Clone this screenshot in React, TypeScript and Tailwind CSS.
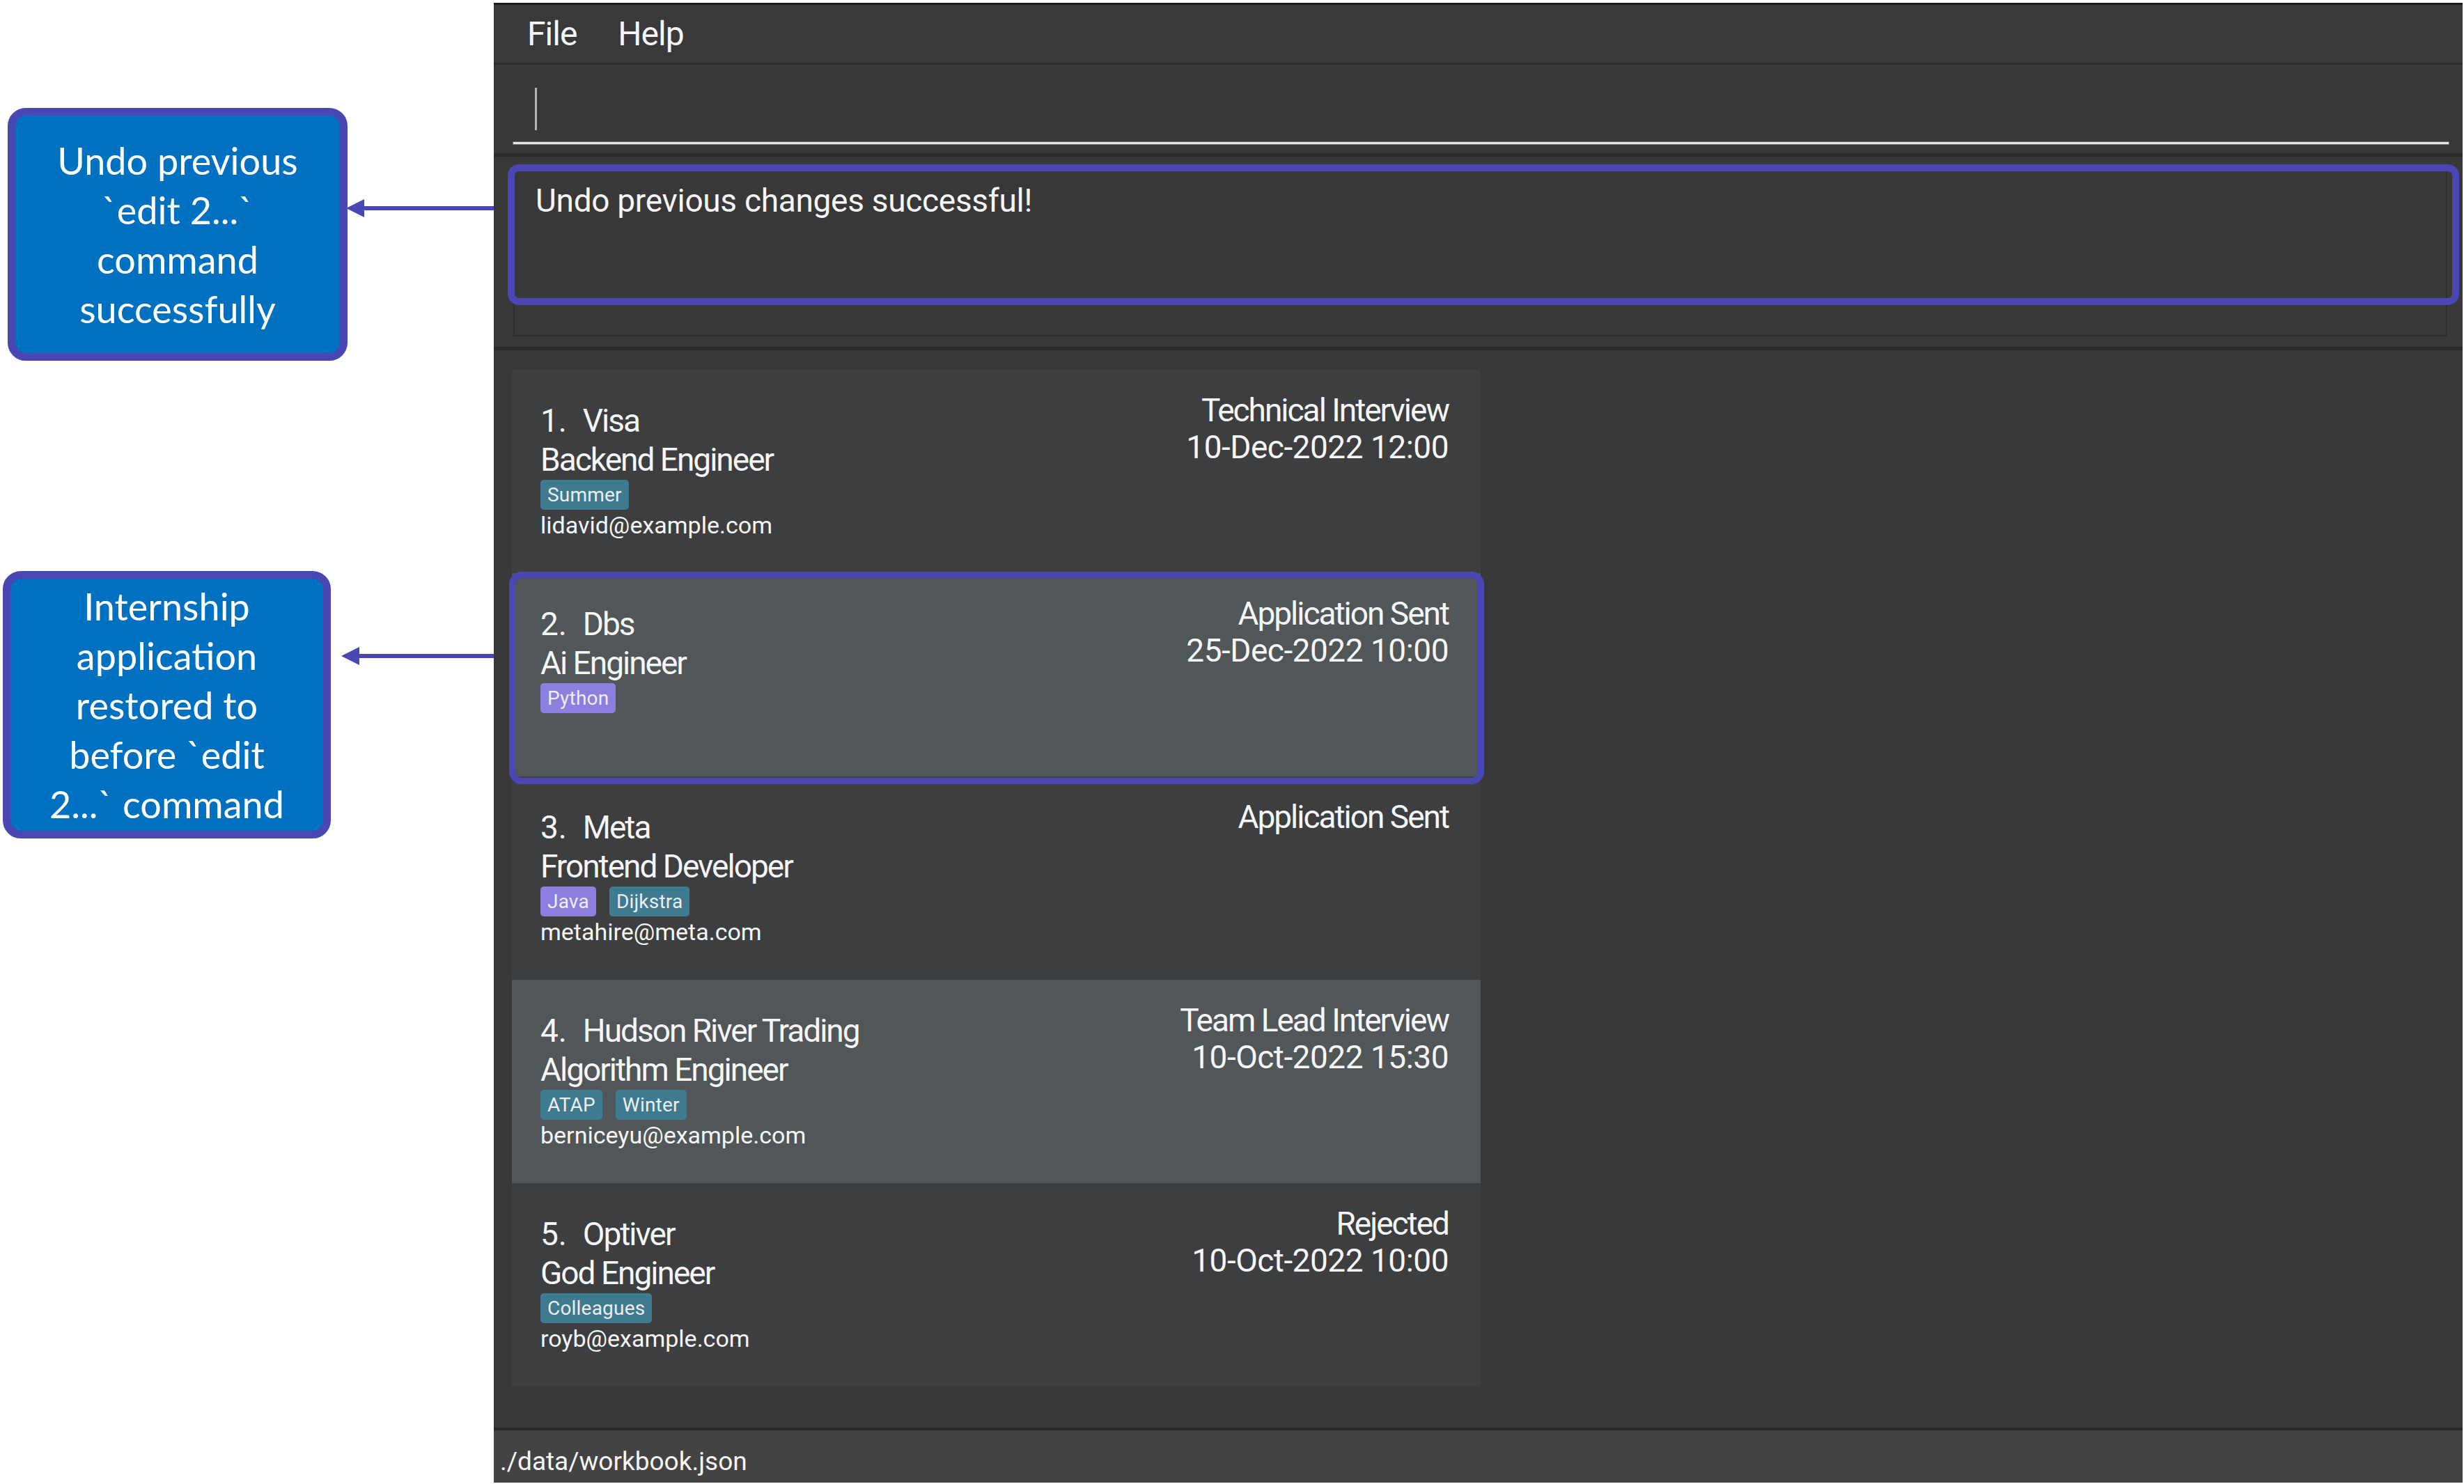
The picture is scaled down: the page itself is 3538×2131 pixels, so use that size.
import clsx from 'clsx'

type Tag = { label: string; tone: 'teal' | 'purple' }

type Application = {
  company: string
  role: string
  tags: Tag[]
  email?: string
  status: string
  date?: string
  highlight?: boolean
}

const applications: Application[] = [
  {
    company: 'Visa',
    role: 'Backend Engineer',
    tags: [{ label: 'Summer', tone: 'teal' }],
    email: 'lidavid@example.com',
    status: 'Technical Interview',
    date: '10-Dec-2022 12:00',
  },
  {
    company: 'Dbs',
    role: 'Ai Engineer',
    tags: [{ label: 'Python', tone: 'purple' }],
    status: 'Application Sent',
    date: '25-Dec-2022 10:00',
    highlight: true,
  },
  {
    company: 'Meta',
    role: 'Frontend Developer',
    tags: [
      { label: 'Java', tone: 'purple' },
      { label: 'Dijkstra', tone: 'teal' },
    ],
    email: 'metahire@meta.com',
    status: 'Application Sent',
  },
  {
    company: 'Hudson River Trading',
    role: 'Algorithm Engineer',
    tags: [
      { label: 'ATAP', tone: 'teal' },
      { label: 'Winter', tone: 'teal' },
    ],
    email: 'berniceyu@example.com',
    status: 'Team Lead Interview',
    date: '10-Oct-2022 15:30',
  },
  {
    company: 'Optiver',
    role: 'God Engineer',
    tags: [{ label: 'Colleagues', tone: 'teal' }],
    email: 'royb@example.com',
    status: 'Rejected',
    date: '10-Oct-2022 10:00',
  },
]

const Arrow = ({ width }: { width: number }) => (
  <svg width={width} height={28} viewBox={`0 0 ${width} 28`}>
    <rect x={22} y={11} width={width - 22} height={6} fill="#4a47b5" />
    <polygon points="0,14 26,1 26,27" fill="#4a47b5" />
  </svg>
)

const Note = ({ lines, className }: { lines: string[]; className: string }) => (
  <div
    className={clsx(
      'flex shrink-0 flex-col items-center justify-center rounded-[26px] border-[11px] border-[#4a47b5] bg-[#0070c0] text-center text-[54px] leading-[71px] text-white',
      className,
    )}
    style={{ fontFamily: 'Lato, "Open Sans", sans-serif' }}
  >
    {lines.map((l) => (
      <div key={l} className="whitespace-pre">
        {l}
      </div>
    ))}
  </div>
)

const TagChip = ({ tag }: { tag: Tag }) => (
  <span
    className={clsx(
      'flex h-[43px] items-center rounded-[5px] px-[10px] text-[28px] tracking-[0.2px] text-[#eeeeee]',
      tag.tone === 'purple' ? 'bg-[#8c7fdf]' : 'bg-[#3e7a90]',
    )}
  >
    {tag.label}
  </span>
)

const Card = ({ app, index }: { app: Application; index: number }) => (
  <div
    className={clsx(
      'relative flex h-[292px] justify-between',
      index % 2 === 0 ? 'bg-[#3c3e3f]' : 'bg-[#515658]',
    )}
  >
    <div className="flex flex-col pl-[41px] pt-[45px]">
      <div className="whitespace-pre text-[46px] leading-[56px] tracking-[-2px]">
        <span className="tracking-[0px]">{`${index + 1}.  `}</span>
        {app.company}
      </div>
      <div className="text-[46px] leading-[56px] tracking-[-2px]">{app.role}</div>
      <div className="mt-[1px] flex gap-[19px]">
        {app.tags.map((t) => (
          <TagChip key={t.label} tag={t} />
        ))}
      </div>
      {app.email && <div className="mt-[2px] text-[34px] leading-[40px] tracking-[0px]">{app.email}</div>}
    </div>
    <div className="flex flex-col items-end pr-[46px] pt-[32px] text-[46px] leading-[53px]">
      <div className="tracking-[-2px]">{app.status}</div>
      {app.date && <div className="tracking-[-0.5px]">{app.date}</div>}
    </div>
    {app.highlight && (
      <div className="absolute -top-[2px] -right-[5px] -bottom-[11px] -left-[4px] z-10 rounded-[18px] border-[9px] border-[#4a47b5]" />
    )}
  </div>
)

export default function App() {
  return (
    <div className="flex h-[2131px] w-[3538px] overflow-hidden bg-white">
      {/* annotations */}
      <div className="flex w-[709px] shrink-0 flex-col">
        <div className="mt-[155px] flex items-start">
          <Note
            className="ml-[11px] h-[363px] w-[488px]"
            lines={['Undo previous', '`edit 2...`', 'command', 'successfully']}
          />
          <div className="ml-[-2px] mt-[130px]">
            <Arrow width={212} />
          </div>
        </div>
        <div className="mt-[302px] flex items-start">
          <Note
            className="ml-[4px] h-[384px] w-[471px]"
            lines={['Internship', 'application', 'restored to', 'before `edit', '2...` command']}
          />
          <div className="ml-[15px] mt-[108px]">
            <Arrow width={219} />
          </div>
        </div>
      </div>

      {/* app window */}
      <div
        className="mt-[4px] flex h-[2125px] w-[2827px] shrink-0 flex-col border-t-[3px] border-[#1c1c1c] bg-[#383838] text-[#f6f6f6]"
        style={{ fontFamily: 'Roboto, "Liberation Sans", sans-serif' }}
      >
        <div className="flex h-[83px] shrink-0 items-center gap-[59px] bg-[#393939] pl-[48px] text-[48px] tracking-[-1px]">
          <span>File</span>
          <span>Help</span>
        </div>
        <div className="h-[3px] shrink-0 bg-[#2a2a2a]" />

        <div className="flex h-[127px] shrink-0 flex-col pl-[28px] pr-[20px]">
          <div className="flex flex-1 items-start pl-[31px] pt-[33px]">
            <div className="h-[61px] w-[3px] bg-[#b4b4b4]" />
          </div>
          <div className="mb-[13px] h-[3px] bg-[#e8e8e8] shadow-[0_0_0_1px_#6a6a6a]" />
        </div>
        <div className="h-[5px] shrink-0 bg-[#2b2b2b]" />

        <div className="flex h-[273px] shrink-0 flex-col pb-[15px] pl-[28px] pr-[22px] pt-[18px]">
          <div className="relative flex-1 border-2 border-[#2e2e2e] bg-[#383838] pl-[30px] pt-[15px] text-[46px] leading-[56px] tracking-[-0.3px]">
            Undo previous changes successful!
            <div className="absolute -top-[9px] -right-[19px] bottom-[43px] -left-[10px] rounded-[16px] border-[10px] border-[#4a47b5]" />
          </div>
        </div>
        <div className="h-[5px] shrink-0 bg-[#2b2b2b]" />

        <div className="flex-1 pl-[26px] pt-[28px]">
          <div className="flex w-[1391px] flex-col">
            {applications.map((a, i) => (
              <Card key={a.company} app={a} index={i} />
            ))}
          </div>
        </div>

        <div className="h-[4px] shrink-0 bg-[#2a2a2a]" />
        <div className="flex h-[75px] shrink-0 items-end bg-[#434343] pb-[7px] pl-[9px] text-[37px] leading-[46px]">
          ./data/workbook.json
        </div>
      </div>
    </div>
  )
}
